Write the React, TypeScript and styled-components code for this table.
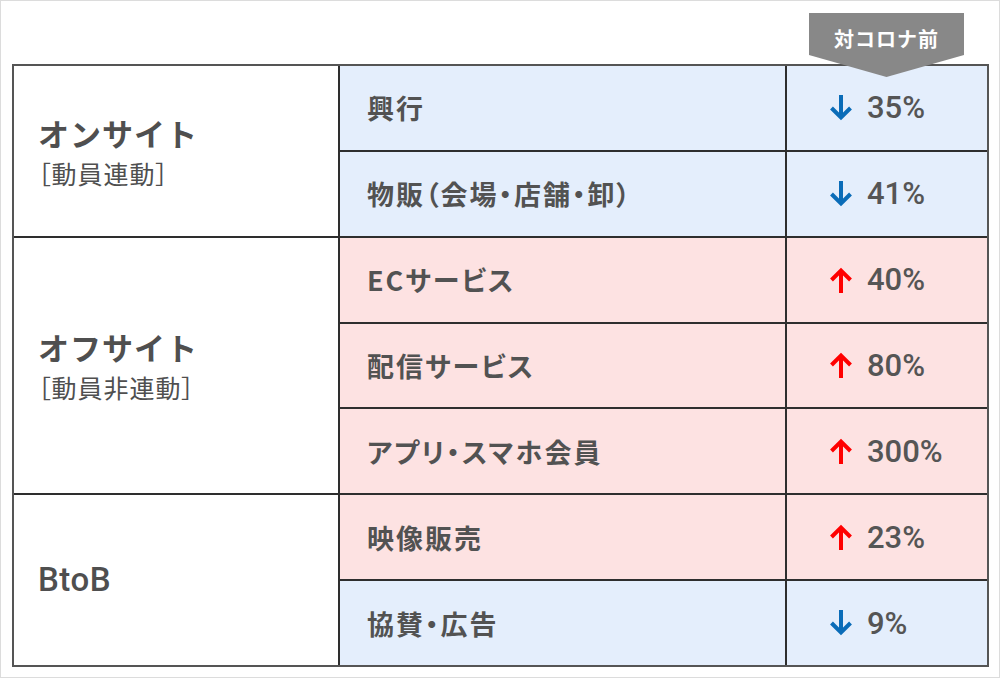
import React from 'react';
import styled, { createGlobalStyle } from 'styled-components';

const GlobalStyle = createGlobalStyle`
  html, body {
    margin: 0;
    padding: 0;
    background: #fff;
  }
  body {
    font-family: "Noto Sans CJK JP", "Noto Sans", sans-serif;
    color: #4f4f4f;
  }
`;

const Frame = styled.div`
  box-sizing: border-box;
  width: 1000px;
  height: 678px;
  border: 1px solid #dcdcdc;
  padding: 63px 0 0 11px;
  background: #fff;
`;

const TableWrap = styled.div`
  position: relative;
  width: 977px;
`;

const Badge = styled.div`
  position: absolute;
  top: -51px;
  left: 797px;
  width: 155px;
  height: 64px;
  background: #888888;
  clip-path: polygon(0 0, 100% 0, 100% 42px, 50% 100%, 0 42px);
  color: #fff;
  font-weight: 700;
  font-size: 20px;
  letter-spacing: 1px;
  display: flex;
  justify-content: center;
  padding-top: 16px;
  box-sizing: border-box;
  line-height: 1;
  z-index: 2;
`;

const Grid = styled.div`
  box-sizing: border-box;
  width: 977px;
  height: 603px;
  border: 2px solid #555;
  background: #2e2e2e;
  display: grid;
  grid-template-columns: 324px 445px 200px;
  grid-template-rows: repeat(7, 1fr);
  gap: 2px;
`;

const GroupCell = styled.div<{ $rows: number }>`
  grid-column: 1;
  grid-row: span ${({ $rows }) => $rows};
  background: #fff;
  display: flex;
  flex-direction: column;
  justify-content: center;
  padding-left: 24px;
`;

const GroupTitle = styled.div`
  font-size: 31px;
  font-weight: 700;
  line-height: 42px;
  letter-spacing: 1px;
`;

const GroupLatin = styled(GroupTitle)`
  font-family: Roboto, "Noto Sans CJK JP", sans-serif;
  font-weight: 500;
  font-size: 33px;
  letter-spacing: 0.5px;
`;

const GroupSub = styled.div`
  font-size: 25px;
  font-weight: 400;
  line-height: 34px;
  font-feature-settings: "palt";
  letter-spacing: 1px;
  margin-top: 2px;
`;

const ItemCell = styled.div<{ $up: boolean }>`
  grid-column: 2;
  background: ${({ $up }) => ($up ? '#fde2e2' : '#e4eefc')};
  display: flex;
  align-items: center;
  padding-left: 27px;
  font-size: 27px;
  font-weight: 600;
  letter-spacing: 2px;
  font-feature-settings: "palt";
  color: #525252;
`;

const ValueCell = styled.div<{ $up: boolean }>`
  grid-column: 3;
  background: ${({ $up }) => ($up ? '#fde2e2' : '#e4eefc')};
  display: flex;
  align-items: center;
  gap: 14px;
  padding-left: 42px;
`;

const Value = styled.span`
  font-family: Roboto, "Liberation Sans", sans-serif;
  font-weight: 500;
  font-size: 31px;
  line-height: 1;
  color: #555;
`;

const Arrow = ({ up }: { up: boolean }) => (
  <svg width="24" height="26" viewBox="0 0 24 26">
    {up ? (
      <g fill="none" stroke="#ff0000" strokeWidth="4">
        <line x1="12" y1="4" x2="12" y2="26" />
        <polyline points="2.5,13 12,3.5 21.5,13" />
      </g>
    ) : (
      <g fill="none" stroke="#0a6cb8" strokeWidth="4">
        <line x1="12" y1="0" x2="12" y2="22" />
        <polyline points="2.5,13 12,22.5 21.5,13" />
      </g>
    )}
  </svg>
);

type Row = { label: string; value: string; up: boolean };

const groups: { title: string; sub?: string; latin?: boolean; rows: Row[] }[] = [
  {
    title: 'オンサイト',
    sub: '［動員連動］',
    rows: [
      { label: '興行', value: '35%', up: false },
      { label: '物販（会場・店舗・卸）', value: '41%', up: false },
    ],
  },
  {
    title: 'オフサイト',
    sub: '［動員非連動］',
    rows: [
      { label: 'ECサービス', value: '40%', up: true },
      { label: '配信サービス', value: '80%', up: true },
      { label: 'アプリ・スマホ会員', value: '300%', up: true },
    ],
  },
  {
    title: 'BtoB',
    latin: true,
    rows: [
      { label: '映像販売', value: '23%', up: true },
      { label: '協賛・広告', value: '9%', up: false },
    ],
  },
];

const App: React.FC = () => {
  return (
    <>
      <GlobalStyle />
      <Frame>
        <TableWrap>
          <Badge>対コロナ前</Badge>
          <Grid>
            {groups.map((g) => (
              <React.Fragment key={g.title}>
                <GroupCell $rows={g.rows.length}>
                  {g.latin ? <GroupLatin>{g.title}</GroupLatin> : <GroupTitle>{g.title}</GroupTitle>}
                  {g.sub && <GroupSub>{g.sub}</GroupSub>}
                </GroupCell>
                {g.rows.map((r) => (
                  <React.Fragment key={r.label}>
                    <ItemCell $up={r.up}>{r.label}</ItemCell>
                    <ValueCell $up={r.up}>
                      <Arrow up={r.up} />
                      <Value>{r.value}</Value>
                    </ValueCell>
                  </React.Fragment>
                ))}
              </React.Fragment>
            ))}
          </Grid>
        </TableWrap>
      </Frame>
    </>
  );
};

export default App;
